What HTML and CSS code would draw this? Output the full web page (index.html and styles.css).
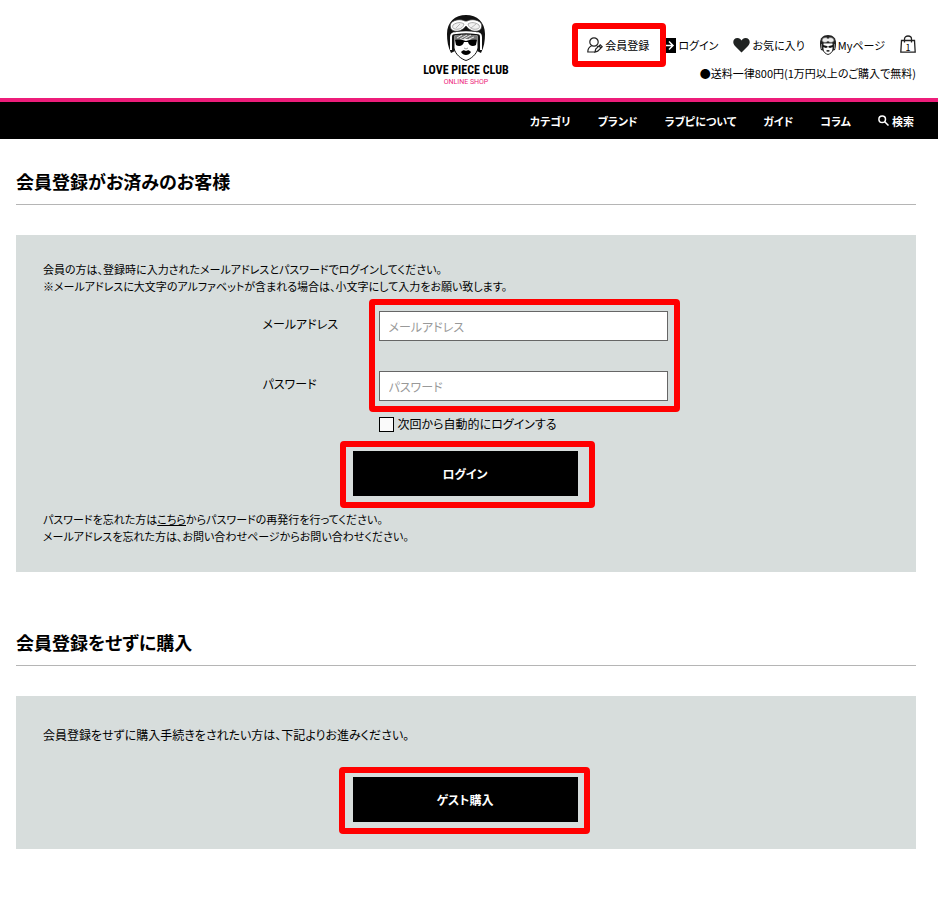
FILE: index.html
```html
<!DOCTYPE html>
<html lang="ja">
<head>
    <meta charset="UTF-8">
    <title>ログイン | LOVE PIECE CLUB ONLINE SHOP</title>
    <link rel="stylesheet" href="styles.css">
</head>
<body>
    <header class="header">
        <a class="logo" href="#">
            <svg class="logo-face" viewBox="0 0 38 46" aria-hidden="true">
                <path d="M4 38C1 32 0 26 0 19 0 7 8 0 19 0s19 7 19 19c0 7-1 13-4 19l-4-2V22H8v14z" fill="#111"/>
                <path d="M7 20h24v13c-1 6-7 11-12 12.500C14 44 8 39 7 33z" fill="#fff" stroke="#111"/>
                <path d="M4 35V22c0-3 1-4 5-4 6-1 14-1 20 0 4 0 5 1 5 4v13" fill="none" stroke="#fff" stroke-width="2"/>
                <path d="M8 21c6-2 16-2 22 0v4l-11-1-11 1z" fill="#777"/>
                <path d="M10 23l5-3m-2 4l7-4m-3 4l7-4m-2 4l5-2" stroke="#fff" stroke-width=".8"/>
                <path d="M8 25c4-1 8 0 11 1 3-1 7-2 11-1l-1 5c-3 2-7 1-8-3h-4c-1 4-5 5-8 3z" fill="#000"/>
                <path d="M4 8c4-4 10-4 14-2h2c4-2 10-2 14 2 2 4 0 7-3 8-5 1-9-1-12-5-3 4-7 6-12 5-3-1-5-4-3-8z" fill="#fff" stroke="#333" stroke-width=".8"/>
                <path d="M6 10c4-3 8-3 11-1-1 4-5 6-9 5-2 0-3-2-2-4zm15-1c3-2 7-2 11 1 1 2 0 4-2 4-4 1-8-1-9-5z" fill="#f2f2f2" stroke="#999" stroke-width=".8"/>
                <path d="M9 13l4-4m11 4l5-4" stroke="#aaa" stroke-width=".8"/>
                <path d="M14 37c2-2 3-2 5-1 2-1 3-1 5 1-2 4-8 4-10 0z" fill="#000"/>
                <path d="M17 33l2 1 2-1" stroke="#999" fill="none"/>
            </svg>
            <span class="logo-name">LOVE PIECE CLUB</span>
            <span class="logo-sub">ONLINE SHOP</span>
        </a>
        <div class="header-side">
            <ul class="user-menu">
                <li>
                    <a class="user-link marked marked-register" href="#">
                        <svg width="16" height="16" viewBox="0 0 16 16" fill="none" stroke="#222" stroke-width="1.2" aria-hidden="true">
                            <circle cx="7" cy="5" r="4.2"/>
                            <path d="M4.5 9C2 10 .8 12 .8 15h6.7M8 15l.7-3 4.5-4.2 2 2-4.5 4.3zM12 9l2 2M10 9.2l1 .8"/>
                        </svg>
                        会員登録
                    </a>
                </li>
                <li>
                    <a class="user-link" href="#">
                        <svg width="12" height="15" viewBox="0 0 12 15" aria-hidden="true">
                            <path d="M0 0h12v15H0z"/>
                            <path d="M0 7.5h8.500M5 3.500l4 4-4 4" fill="none" stroke="#fff" stroke-width="1.500"/>
                        </svg>
                        ログイン
                    </a>
                </li>
                <li>
                    <a class="user-link" href="#">
                        <svg width="17" height="16" viewBox="0 0 17 16" aria-hidden="true">
                            <path d="M8.500 15.500L2 9C-1 6 0 1 4.500 1c2 0 3 1 4 2.500C9.500 2 10.500 1 12.500 1 17 1 18 6 15 9z" fill="#202322"/>
                        </svg>
                        お気に入り
                    </a>
                </li>
                <li>
                    <a class="user-link" href="#">
                        <svg width="16" height="20" viewBox="0 0 16 20" aria-hidden="true">
                            <path d="M1 15C0 12 0 10 0 8c0-5 3-8 8-8s8 3 8 8c0 2 0 4-1 7l-3 1H4z" fill="#222"/>
                            <path d="M3 8h10v6c0 3-3 5-5 5.500C6 19 3 17 3 14z" fill="#fff" stroke="#222"/>
                            <path d="M2 5c1-3 5-3 6-1 1-2 5-2 6 1 0 3-5 3-6 1-1 2-6 2-6-1z" fill="#eee" stroke="#666" stroke-width=".7"/>
                            <path d="M3 10l4 1 1 1 1-1 4-1v2l-3 1-2-1-2 1-3-1zM6 16q2-2 4 0-2 1.500-4 0z" fill="#111"/>
                            <path d="M4 8.500h8M1.500 9v5m13-5v5" stroke="#aaa" stroke-width=".7"/>
                        </svg>
                        Myページ
                    </a>
                </li>
                <li>
                    <a class="user-link cart" href="#" aria-label="カート">
                        <svg width="16" height="18" viewBox="0 0 16 18" fill="none" stroke="#222" stroke-width="1.300" aria-hidden="true">
                            <path d="M1.500 5.500h13l.7 11.700H.8zM4.500 7.500V4c0-4 7-4 7 0v3.500"/>
                        </svg>
                        <span class="cart-count">1</span>
                    </a>
                </li>
            </ul>
            <p class="shipping">●送料一律800円(1万円以上のご購入で無料)</p>
        </div>
    </header>

    <nav class="nav">
        <a href="#">カテゴリ</a>
        <a href="#">ブランド</a>
        <a href="#">ラブピについて</a>
        <a href="#">ガイド</a>
        <a href="#">コラム</a>
        <a class="nav-search" href="#">
            <svg width="11" height="11" viewBox="0 0 11 11" fill="none" stroke="#fff" stroke-width="1.500" aria-hidden="true">
                <circle cx="4.200" cy="4.200" r="3.300"/>
                <path d="M6.700 6.700l3.800 3.800"/>
            </svg>
            検索
        </a>
    </nav>

    <main class="main">
        <section class="section">
            <h2>会員登録がお済みのお客様</h2>
            <div class="panel">
                <p class="note">会員の方は、登録時に入力されたメールアドレスとパスワードでログインしてください。<br>※メールアドレスに大文字のアルファベットが含まれる場合は、小文字にして入力をお願い致します。</p>
                <form class="login-form">
                    <div class="fields">
                        <div class="labels">
                            <label for="email">メールアドレス</label>
                            <label for="password">パスワード</label>
                        </div>
                        <div class="inputs marked marked-inputs">
                            <input type="email" id="email" name="email" placeholder="メールアドレス">
                            <input type="password" id="password" name="password" placeholder="パスワード">
                        </div>
                        <div class="remember">
                            <input type="checkbox" id="remember" name="remember">
                            <label for="remember">次回から自動的にログインする</label>
                        </div>
                    </div>
                    <div class="action marked marked-login">
                        <button type="submit" class="btn">ログイン</button>
                    </div>
                </form>
                <p class="note">パスワードを忘れた方は<a href="#">こちら</a>からパスワードの再発行を行ってください。<br>メールアドレスを忘れた方は、お問い合わせページからお問い合わせください。</p>
            </div>
        </section>

        <section class="section">
            <h2>会員登録をせずに購入</h2>
            <div class="panel">
                <p class="lead">会員登録をせずに購入手続きをされたい方は、下記よりお進みください。</p>
                <div class="action marked marked-guest">
                    <button type="button" class="btn">ゲスト購入</button>
                </div>
            </div>
        </section>
    </main>
</body>
</html>
```
FILE: styles.css
```css
* {
    box-sizing: border-box;
}

body {
    margin: 0;
    background-color: #fff;
    color: #000;
    font-family: "Noto Sans CJK JP", sans-serif;
    font-size: 12px;
    line-height: 20px;
    font-feature-settings: "palt";
}

a {
    color: inherit;
}

h2, p, ul {
    margin: 0;
    padding: 0;
}

/* header */
.header {
    display: grid;
    grid-template-columns: 1fr auto 1fr;
    padding: 15px 22px 13px 16px;
    border-bottom: 4px solid #ed1d7a;
}

.logo {
    grid-column: 2;
    display: flex;
    flex-direction: column;
    align-items: center;
    text-decoration: none;
}

.logo-face {
    width: 38px;
    height: 46px;
}

.logo-name {
    font-family: "Roboto Condensed", Roboto, sans-serif;
    font-weight: bold;
    font-size: 12px;
    line-height: 18px;
}

.logo-sub {
    color: #ed1d7a;
    font-family: Roboto, sans-serif;
    font-size: 7px;
    line-height: 6px;
}

.header-side {
    display: flex;
    flex-direction: column;
    align-items: flex-end;
    gap: 8px;
    padding-top: 20px;
}

.user-menu {
    display: flex;
    gap: 15px;
    list-style: none;
}

.user-link {
    display: flex;
    align-items: center;
    gap: 2px;
    font-size: 11px;
    text-decoration: none;
    white-space: nowrap;
}

.cart {
    position: relative;
}

.cart-count {
    position: absolute;
    top: 3px;
    left: 0;
    right: 0;
    font-size: 9px;
    text-align: center;
}

.shipping {
    font-size: 11px;
    white-space: nowrap;
}

/* global nav */
.nav {
    display: flex;
    justify-content: flex-end;
    align-items: center;
    gap: 27px;
    height: 37px;
    padding: 0 24px;
    background-color: #000;
    color: #fff;
    font-size: 11px;
    font-weight: bold;
}

.nav a {
    text-decoration: none;
}

.nav-search {
    display: flex;
    align-items: center;
    gap: 3px;
}

/* contents */
.main {
    padding: 27px 22px 0 16px;
}

.section {
    margin-bottom: 55px;
}

h2 {
    margin-bottom: 30px;
    padding-bottom: 8px;
    border-bottom: 1px solid #b5b5b5;
    font-size: 18px;
    line-height: 30px;
}

.panel {
    padding: 26px 29px 27px 27px;
    background-color: #d7dddc;
}

.note {
    font-size: 11px;
    line-height: 17px;
}

.lead {
    margin: 3px 0 32px;
}

.login-form {
    padding: 16px 0 15px;
}

.fields {
    display: grid;
    grid-template-columns: 116px 289px;
    justify-content: center;
}

.labels,
.inputs {
    display: grid;
    gap: 30px;
}

.labels label {
    height: 30px;
    line-height: 26px;
}

.inputs input {
    width: 100%;
    height: 30px;
    padding: 0 9px;
    border: 1px solid #666;
    background-color: #fff;
    font: inherit;
    font-feature-settings: inherit;
}

.inputs input::placeholder {
    color: #999;
}

.remember {
    grid-column: 2;
    display: flex;
    align-items: center;
    gap: 4px;
    margin: 13px 0 17px;
}

.remember input {
    appearance: none;
    width: 15px;
    height: 15px;
    margin: 0;
    border: 1px solid #000;
    background-color: #fafafa;
}

.remember input:checked {
    background-color: #000;
}

.action {
    width: 225px;
    margin: 0 auto;
}

.btn {
    display: block;
    width: 100%;
    height: 45px;
    border: none;
    background-color: #000;
    color: #fff;
    font: inherit;
    font-weight: bold;
    font-feature-settings: inherit;
    cursor: pointer;
}

/* red frames */
.marked {
    position: relative;
}

.marked::after {
    content: "";
    position: absolute;
    z-index: 1;
    border: 6px solid #f00;
    border-radius: 4px;
    pointer-events: none;
}

.marked-register::after {
    inset: -12px -17px -12px -15px;
}

.marked-inputs::after {
    inset: -12px -12px -11px -10px;
}

.marked-login::after {
    inset: -10px -17px -12px -13px;
}

.marked-guest::after {
    inset: -10px -12px -12px -14px;
}
```
